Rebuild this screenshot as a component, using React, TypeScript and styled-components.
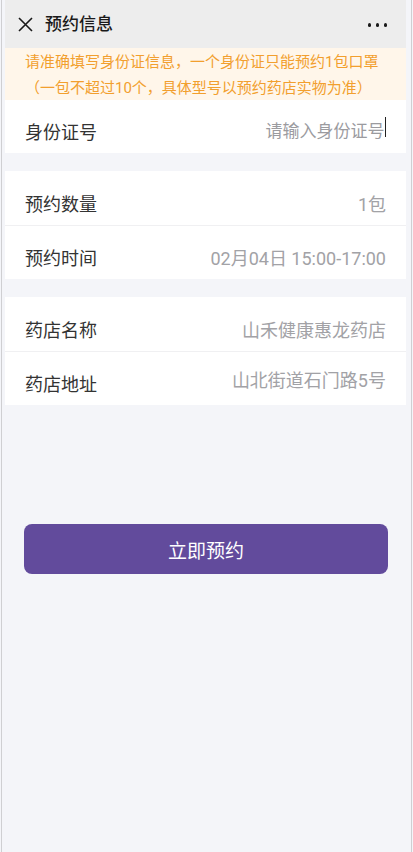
import React from "react";
import styled, { createGlobalStyle } from "styled-components";

const Global = createGlobalStyle`
  html, body { margin: 0; padding: 0; background: #f4f5f9; }
  body { font-family: Roboto, "Noto Sans CJK SC", sans-serif; }
  * { box-sizing: border-box; }
`;

const Frame = styled.div`
  margin: 0 1px;
  min-height: 852px;
  border-left: 1px solid #cfcfd2;
  border-right: 1px solid #cfcfd2;
  background: #f4f5f9;
  padding: 0 5px 0 3px;
  display: flex;
  flex-direction: column;
`;

const Header = styled.header`
  height: 48px;
  background: #ededed;
  display: flex;
  align-items: center;
  padding: 0 19px 0 12px;
`;

const Close = styled.div`
  width: 17px;
  height: 17px;
  display: flex;
  align-items: center;
  justify-content: center;
  margin-top: 1px;
`;

const Title = styled.h1`
  margin: 0 0 0 11px;
  font-size: 17px;
  font-weight: 500;
  color: #1a1a1a;
  flex: 1;
  line-height: 48px;
`;

const Dots = styled.div`
  display: flex;
  gap: 4.5px;
  margin-top: 2px;
`;

const Dot = styled.span`
  width: 3.5px;
  height: 3.5px;
  border-radius: 50%;
  background: #1a1a1a;
`;

const Notice = styled.div`
  height: 52px;
  background: #fff6ea;
  color: #f29f2e;
  font-size: 15px;
  line-height: 26px;
  padding: 1px 0 0 20px;
  white-space: nowrap;
`;

const Group = styled.section<{ $gap?: number }>`
  background: #fff;
  margin-top: ${(p) => p.$gap ?? 0}px;
  display: flex;
  flex-direction: column;
`;

const Row = styled.div<{ $h: number; $line?: boolean }>`
  height: ${(p) => p.$h}px;
  display: flex;
  align-items: center;
  justify-content: space-between;
  padding: 0 20px;
  border-top: ${(p) => (p.$line ? "1px solid #f0f0f2" : "none")};
`;

const Label = styled.span`
  font-size: 18px;
  color: #333;
  padding-top: 9px;
`;

const Value = styled.span<{ $shift?: boolean }>`
  font-size: 18px;
  color: #a2a2a6;
  padding-top: ${(p) => (p.$shift ? 9 : 0)}px;
`;

const Placeholder = styled.span`
  font-size: 17px;
  color: #9b9b9f;
  padding-top: 5px;
  display: flex;
  align-items: center;
`;

const Caret = styled.span`
  display: inline-block;
  width: 1.5px;
  height: 20px;
  background: #222;
  margin-left: 0px;
  margin-top: -4px;
`;

const Action = styled.div`
  padding: 119px 18px 0 19px;
`;

const Button = styled.button`
  width: 100%;
  height: 50px;
  border: none;
  border-radius: 8px;
  background: #624b9c;
  color: #fff;
  font-family: Roboto, "Noto Sans CJK SC", sans-serif;
  font-size: 19px;
  display: flex;
  align-items: center;
  justify-content: center;
  padding: 0;
`;

export default function App() {
  return (
    <>
      <Global />
      <Frame>
        <Header>
          <Close>
            <svg width="15" height="15" viewBox="0 0 15 15">
              <path d="M1 1 L14 14 M14 1 L1 14" stroke="#1a1a1a" strokeWidth="1.6" fill="none" />
            </svg>
          </Close>
          <Title>预约信息</Title>
          <Dots>
            <Dot />
            <Dot />
            <Dot />
          </Dots>
        </Header>
        <Notice>
          请准确填写身份证信息，一个身份证只能预约1包口罩
          <br />
          （一包不超过10个，具体型号以预约药店实物为准）
        </Notice>
        <Group>
          <Row $h={53}>
            <Label>身份证号</Label>
            <Placeholder>
              请输入身份证号
              <Caret />
            </Placeholder>
          </Row>
        </Group>
        <Group $gap={18}>
          <Row $h={54}>
            <Label>预约数量</Label>
            <Value $shift>1包</Value>
          </Row>
          <Row $h={54} $line>
            <Label>预约时间</Label>
            <Value $shift>02月04日 15:00-17:00</Value>
          </Row>
        </Group>
        <Group $gap={18}>
          <Row $h={54}>
            <Label>药店名称</Label>
            <Value $shift>山禾健康惠龙药店</Value>
          </Row>
          <Row $h={54} $line>
            <Label>药店地址</Label>
            <Value>山北街道石门路5号</Value>
          </Row>
        </Group>
        <Action>
          <Button>立即预约</Button>
        </Action>
      </Frame>
    </>
  );
}
